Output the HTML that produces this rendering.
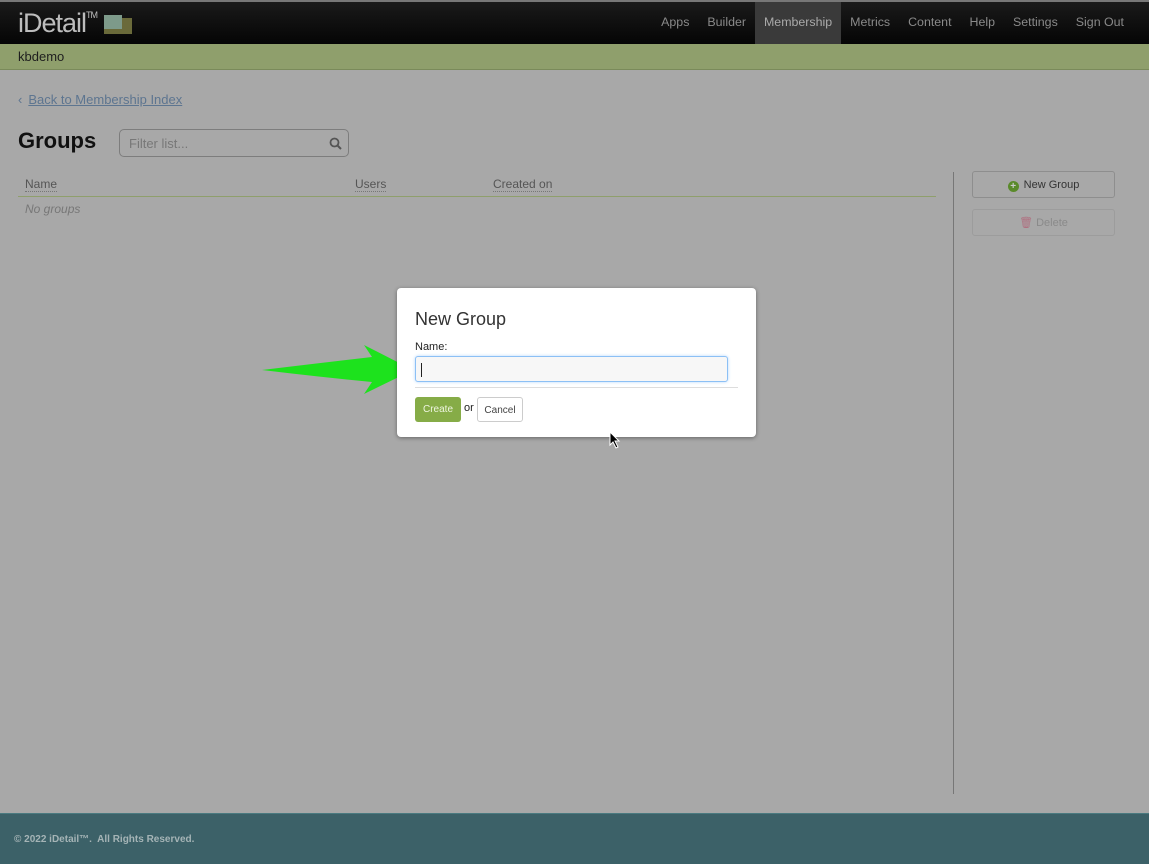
<!DOCTYPE html>
<html><head><meta charset="utf-8"><style>
*{box-sizing:border-box}
body{margin:0;width:1149px;height:864px;overflow:hidden;background:#a8a8a8;font-family:"Liberation Sans",Arial,sans-serif;position:relative}
.top{position:absolute;left:0;top:0;width:1149px;height:44px;background:linear-gradient(#1a1a1a,#050505);border-top:2px solid #777}
.logo{position:absolute;left:18px;top:6px;color:#bdbdbd;font-size:27px;letter-spacing:-1px}
.logo sup{font-size:9px;vertical-align:top;position:relative;top:2px}
.nav{position:absolute;right:16px;top:0;display:flex;height:42px}
.nav div{padding:0 9px;line-height:41px;font-size:12.4px;color:#8a8a8a}
.nav .act{background:#3a3a3a;color:#aaa}
.sub{position:absolute;top:44px;left:0;width:1149px;height:26px;background:#8f9f6c;font-size:13px;line-height:26px;padding-left:18px;color:#1e1e1e;border-bottom:1px solid #7a8a5a}
.back{position:absolute;left:18px;top:92px;font-size:13px;color:#5d7590}
.back u{margin-left:6px}
h1{position:absolute;left:18px;top:128px;margin:0;font-size:22px;font-weight:bold;color:#111}
.filter{position:absolute;left:119px;top:129px;width:230px;height:28px;border:1px solid #7d7d7d;border-radius:5px;font-size:13px;color:#777;padding:6px 9px}
.th{position:absolute;top:177px;font-size:12px;color:#555;border-bottom:1px dotted #777}
.hr{position:absolute;left:18px;top:196px;width:918px;height:1px;background:#8f9f6c}
.ng{position:absolute;left:25px;top:202px;font-size:12px;font-style:italic;color:#777}
.vl{position:absolute;left:953px;top:172px;width:1px;height:622px;background:#777}
.btn{position:absolute;left:972px;width:143px;height:27px;border:1px solid #8e8e8e;border-radius:3px;font-size:11px;text-align:center;line-height:27px;color:#333}
.foot{position:absolute;left:0;top:813px;width:1149px;height:51px;background:#3c6168;border-top:1px solid #4a7a80;color:#a5b4b6;font-size:10px;font-weight:bold;padding:20px 14px}
.dlg{position:absolute;left:397px;top:288px;width:359px;height:149px;background:#fff;border-radius:4px;box-shadow:0 1px 4px rgba(0,0,0,.4)}
.dlg h2{position:absolute;left:18px;top:21px;margin:0;font-weight:normal;font-size:18px;color:#333}
.lbl{position:absolute;left:18px;top:53px;font-size:11px;color:#222}
.inp{position:absolute;left:18px;top:68px;width:313px;height:26px;border:1px solid #8cc0f5;border-radius:3px;background:#f7f7f7;box-shadow:0 0 3px #b6d7fb}
.inp:after{content:"";position:absolute;left:5px;top:6px;width:1px;height:14px;background:#222}
.sep{position:absolute;left:18px;top:99px;width:323px;height:1px;background:#ddd}
.create{position:absolute;left:18px;top:109px;width:46px;height:25px;background:#86ac47;border-radius:3px;color:#eef5e0;font-size:10px;text-align:center;line-height:25px}
.or{position:absolute;left:67px;top:114px;font-size:11px;color:#222}
.cancel{position:absolute;left:80px;top:109px;width:46px;height:25px;border:1px solid #ccc;border-radius:3px;color:#444;font-size:10px;text-align:center;line-height:25px}
</style></head><body>
<div class="top">
<div class="logo">iDetail<sup>TM</sup></div>
<svg style="position:absolute;left:102px;top:12px" width="32" height="22"><rect x="2" y="4" width="28" height="16" fill="#6a6a3a"/><rect x="2" y="1" width="18" height="14" fill="#7d9a8a"/></svg>
<div class="nav"><div>Apps</div><div>Builder</div><div class="act">Membership</div><div>Metrics</div><div>Content</div><div>Help</div><div>Settings</div><div>Sign Out</div></div>
</div>
<div class="sub">kbdemo</div>
<div class="back">‹<u>Back to Membership Index</u></div>
<h1>Groups</h1>
<div class="filter">Filter list...<svg style="position:absolute;right:6px;top:7px" width="13" height="13"><circle cx="5.5" cy="5.5" r="4" fill="none" stroke="#555" stroke-width="1.8"/><line x1="8.5" y1="8.5" x2="12" y2="12" stroke="#555" stroke-width="2"/></svg></div>
<div class="th" style="left:25px">Name</div><div class="th" style="left:355px">Users</div><div class="th" style="left:493px">Created on</div>
<div class="hr"></div>
<div class="ng">No groups</div>
<div class="vl"></div>
<div class="btn" style="top:171px"><span style="display:inline-block;width:11px;height:11px;border-radius:50%;background:#5a8a2a;color:#ccc;font-size:10px;line-height:11px;font-weight:bold;vertical-align:-1px;margin-right:5px">+</span>New Group</div>
<div class="btn" style="top:209px;border-color:#9c9c9c;color:#8a8a8a"><span style="color:#b07080">🗑</span> Delete</div>
<div class="foot">© 2022 iDetail™.&nbsp; All Rights Reserved.</div>
<svg style="position:absolute;left:0;top:0" width="1149" height="864"><path d="M262,370 Q320,363 372,357 L364,345 L413,370 L364,394 L372,382 Q320,377 262,370 Z" fill="#1de21d"/></svg>
<div class="dlg">
<h2>New Group</h2>
<div class="lbl">Name:</div>
<div class="inp"></div>
<div class="sep"></div>
<div class="create">Create</div>
<div class="or">or</div>
<div class="cancel">Cancel</div>
</div>
<svg style="position:absolute;left:609px;top:431px" width="12" height="18"><polygon points="1,1 1,14 4,11 7,17 9,16 6,10 10,10" fill="#000" stroke="#fff" stroke-width="1"/></svg>
</body></html>
